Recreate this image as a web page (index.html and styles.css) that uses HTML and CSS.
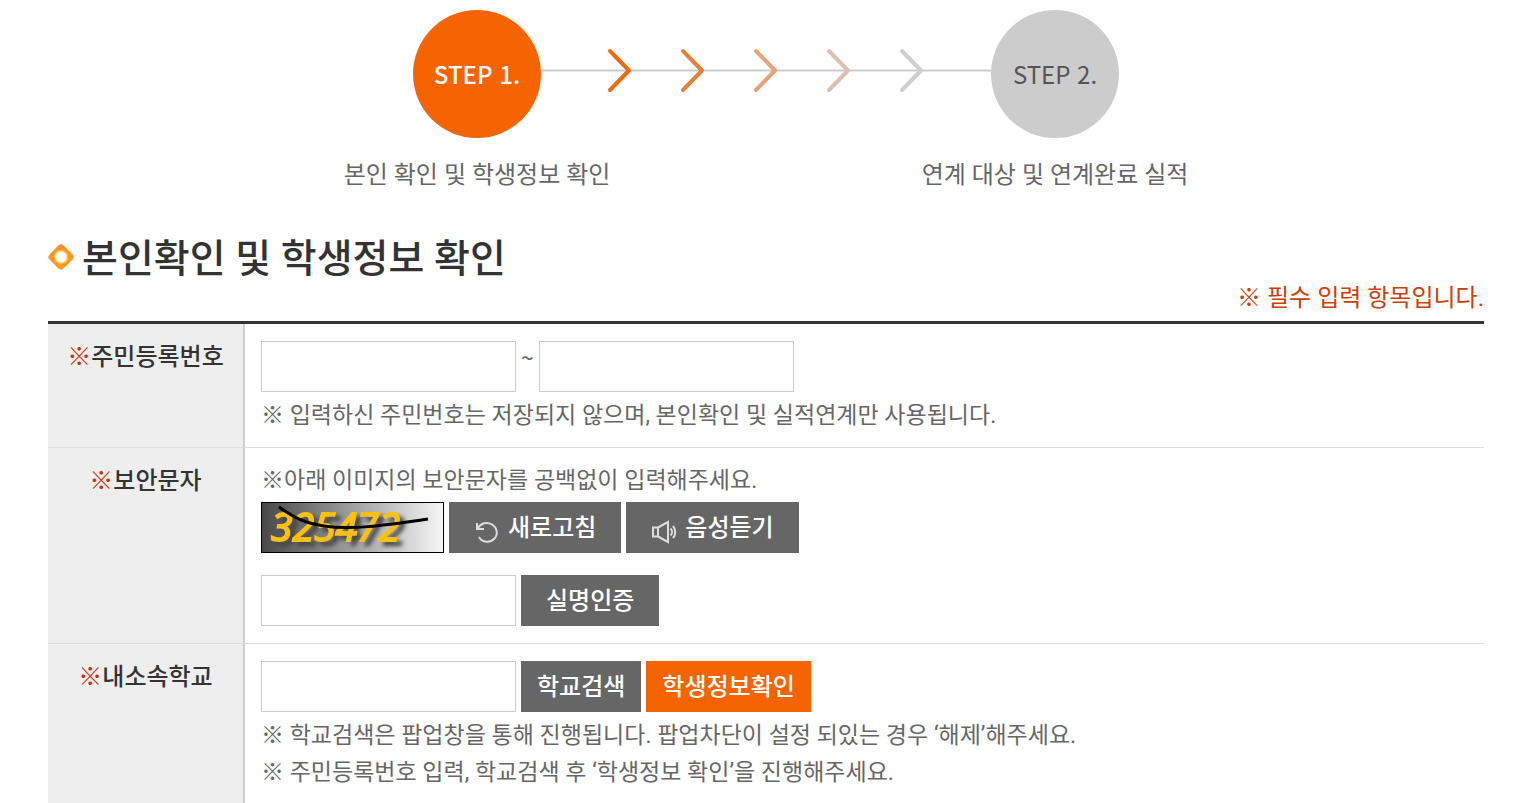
FILE: index.html
```
<!DOCTYPE html>
<html lang="ko">

<head>
    <meta charset="UTF-8">
    <meta name="viewport" content="width=device-width, initial-scale=1">
    <title>본인확인 및 학생정보 확인</title>
    <link rel="stylesheet" href="styles.css">
</head>

<body>
    <main class="page">
        <div class="steps">
            <div class="step-circle on">STEP 1.</div>
            <svg class="step-line" width="450" height="128" viewBox="0 0 450 128" aria-hidden="true">
                <path class="rail" d="M0 60.5H450" />
                <g class="arrows">
                    <path stroke="#ee6a10" d="M69 41l19 19.500L69 80" />
                    <path stroke="#e88038" d="M142 41l19 19.500L142 80" />
                    <path stroke="#e8a27a" d="M215 41l19 19.500L215 80" />
                    <path stroke="#dcc0b2" d="M288 41l19 19.500L288 80" />
                    <path stroke="#cecece" d="M361 41l19 19.500L361 80" />
                </g>
            </svg>
            <div class="step-circle">STEP 2.</div>
            <p class="step-label">본인 확인 및 학생정보 확인</p>
            <p class="step-label last">연계 대상 및 연계완료 실적</p>
        </div>

        <h1 class="title">
            <svg width="26" height="26" viewBox="0 0 26 26" aria-hidden="true">
                <defs>
                    <linearGradient id="bullet" x1="0" y1="0" x2="1" y2="1">
                        <stop offset="0" stop-color="#ff8a30" />
                        <stop offset="1" stop-color="#ffa01c" />
                    </linearGradient>
                    <radialGradient id="shine">
                        <stop offset="0.5" stop-color="#fff" />
                        <stop offset="0.7" stop-color="#ffe890" />
                        <stop offset="1" stop-color="#ffb020" stop-opacity="0" />
                    </radialGradient>
                </defs>
                <rect x="3" y="3" width="20" height="20" rx="4" fill="url(#bullet)" transform="rotate(45 13 13)" />
                <circle cx="13" cy="13" r="8" fill="url(#shine)" />
            </svg>
            본인확인 및 학생정보 확인
        </h1>
        <p class="required">※ 필수 입력 항목입니다.</p>

        <form>
            <table class="form-table">
                <tr>
                    <th scope="row"><label for="jumin1"><span class="mark">※</span>주민등록번호</label></th>
                    <td>
                        <div class="cell">
                            <div class="line">
                                <input type="text" id="jumin1">
                                <span class="tilde">~</span>
                                <input type="password" id="jumin2" aria-label="주민등록번호 뒷자리">
                            </div>
                            <p class="note">※ 입력하신 주민번호는 저장되지 않으며, 본인확인 및 실적연계만 사용됩니다.</p>
                        </div>
                    </td>
                </tr>
                <tr>
                    <th scope="row"><label for="captcha"><span class="mark">※</span>보안문자</label></th>
                    <td>
                        <div class="cell">
                            <p class="note">※아래 이미지의 보안문자를 공백없이 입력해주세요.</p>
                            <div class="line">
                                <svg class="captcha" width="181" height="49" viewBox="0 0 181 49">
                                    <defs>
                                        <linearGradient id="fade">
                                            <stop offset="0" stop-color="#484848" />
                                            <stop offset="1" stop-color="#f6f6f6" />
                                        </linearGradient>
                                    </defs>
                                    <rect width="181" height="49" fill="url(#fade)" />
                                    <text class="digits" x="9" y="38">325472</text>
                                    <path class="scratch" d="M17 4C31 14 42 20 62 23C88 27 119 23 166 16" />
                                </svg>
                                <button type="button" class="btn wide">
                                    <svg width="26" height="26" viewBox="0 0 26 26" aria-hidden="true">
                                        <path d="M3 4v6h7M3.500 9.500C7 4 13 2.500 18 5.500C23 8.500 24.500 15 20.500 19.500C16 24.500 8 23.500 5 18" />
                                    </svg>
                                    새로고침
                                </button>
                                <button type="button" class="btn wide">
                                    <svg width="26" height="26" viewBox="0 0 26 26" aria-hidden="true">
                                        <path d="M2 8.500h5v9H2zM7 8.500L17 3v20L7 17.500M19.500 9.500c2 2 2 5 0 7M22 7c3 3.500 3 8.500 0 12" />
                                    </svg>
                                    음성듣기
                                </button>
                            </div>
                            <div class="line answer">
                                <input type="text" id="captcha">
                                <button type="button" class="btn wide">실명인증</button>
                            </div>
                        </div>
                    </td>
                </tr>
                <tr>
                    <th scope="row"><label for="school"><span class="mark">※</span>내소속학교</label></th>
                    <td>
                        <div class="cell">
                            <div class="line">
                                <input type="text" id="school">
                                <button type="button" class="btn">학교검색</button>
                                <button type="button" class="btn orange">학생정보확인</button>
                            </div>
                            <p class="note">※ 학교검색은 팝업창을 통해 진행됩니다. 팝업차단이 설정 되있는 경우 ‘해제’해주세요.</p>
                            <p class="note">※ 주민등록번호 입력, 학교검색 후 ‘학생정보 확인’을 진행해주세요.</p>
                        </div>
                    </td>
                </tr>
            </table>
        </form>
    </main>
</body>

</html>
```
FILE: styles.css
```
* {
    box-sizing: border-box;
}

body {
    margin: 0;
    background: #fff;
    color: #666;
    font: 24px/32px Roboto, "Noto Sans CJK KR", sans-serif;
}

p {
    margin: 0;
}

.page {
    padding: 10px 55px 0 48px;
}

/* Steps */
.steps {
    display: grid;
    grid-template-columns: 128px 450px 128px;
    row-gap: 21px;
    justify-content: center;
}

.step-circle {
    display: flex;
    align-items: center;
    justify-content: center;
    height: 128px;
    border-radius: 50%;
    background: #ccc;
    color: #555;
    font-family: "Noto Sans CJK KR", sans-serif;
}

.step-circle.on {
    background: #f56400;
    color: #fff;
    font-weight: 500;
}

.step-line {
    display: block;
}

.rail {
    stroke: #ccc;
    stroke-width: 2;
}

.arrows {
    fill: none;
    stroke-width: 4;
    stroke-linecap: round;
    stroke-linejoin: round;
}

.step-label {
    justify-self: center;
    white-space: nowrap;
}

.step-label.last {
    grid-column: 3;
}

/* Title */
.title {
    display: flex;
    align-items: center;
    gap: 8px;
    margin: 45px 0 0;
    color: #333;
    font-size: 39px;
    font-weight: 500;
    line-height: 46px;
}

.title svg {
    margin-bottom: 4px;
}

.required {
    padding-bottom: 7px;
    color: #c8400c;
    text-align: right;
}

/* Form table */
.form-table {
    width: 100%;
    border-spacing: 0;
    border-top: 3px solid #333;
}

.form-table th,
.form-table td {
    padding: 17px 16px 15px;
    border-bottom: 1px solid #ddd;
    vertical-align: top;
}

.form-table th {
    width: 197px;
    border-right: 2px solid #ccc;
    background: #eee;
    color: #333;
    font-weight: 500;
    white-space: nowrap;
}

.mark {
    color: #c8320c;
    font-weight: 400;
}

.cell {
    display: flex;
    flex-direction: column;
    gap: 5px;
}

.line {
    display: flex;
    gap: 5px;
}

.line + .note {
    margin-top: 3px;
}

.answer {
    margin-top: 17px;
    padding-bottom: 2px;
}

.note {
    font-size: 23px;
}

.tilde {
    font-family: "Noto Sans CJK KR", sans-serif;
    font-size: 23px;
}

input {
    width: 255px;
    height: 51px;
    padding: 0 12px;
    border: 1px solid #ccc;
    background: #fff;
    color: #333;
    font: inherit;
}

.btn {
    display: flex;
    align-items: center;
    gap: 8px;
    height: 51px;
    padding: 0 16px;
    border: 0;
    background: #666;
    color: #fff;
    font: inherit;
    font-weight: 500;
}

.btn.wide {
    padding: 0 25px;
}

.btn.orange {
    background: #f56400;
}

.btn svg {
    margin-top: 8px;
    fill: none;
    stroke: #ddd;
    stroke-width: 2;
}

/* Security image */
.captcha {
    box-sizing: content-box;
    border: 1px solid #000;
}

.digits {
    fill: #fcc010;
    stroke: #fcc010;
    stroke-width: 2;
    font: italic 39px "Open Sans", sans-serif;
    filter: drop-shadow(5px 4px 2px #444);
}

.scratch {
    fill: none;
    stroke: #000;
    stroke-width: 3;
}
```
